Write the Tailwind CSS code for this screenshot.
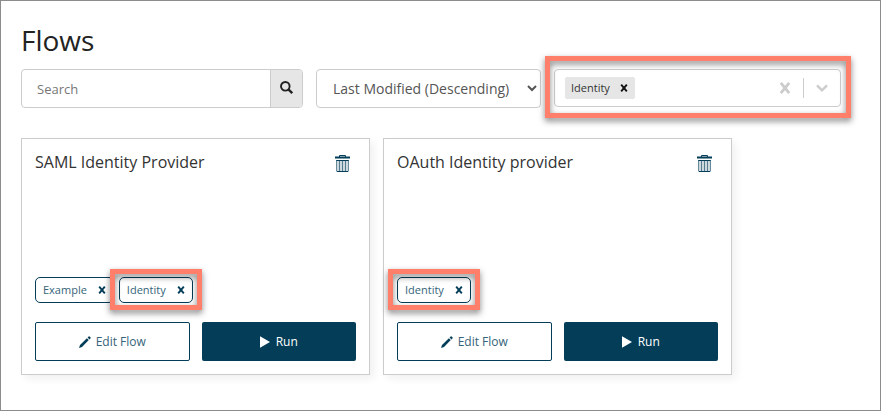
<!DOCTYPE html>
<html lang="en">
<head>
    <meta charset="UTF-8">
    <meta name="viewport" content="width=device-width, initial-scale=1.0">
    <title>Flows</title>
    <script src="https://cdn.jsdelivr.net/npm/@tailwindcss/browser@4"></script>
</head>
<body class="bg-white font-['Open_Sans',sans-serif] text-[#333]">
    <!-- Shared icons -->
    <svg class="hidden">
        <symbol id="icon-cross" viewBox="0 0 8 8">
            <path d="M1.2 0.6 L6.8 7.4 M6.8 0.6 L1.2 7.4" stroke="currentColor" stroke-width="1.9" fill="none"/>
        </symbol>
        <symbol id="icon-trash" viewBox="0 0 15 18">
            <path d="M4.5 3 V1.5 H10.5 V3" stroke="currentColor" fill="none"/>
            <path d="M0 2.6 H15 V4.6 H0 Z M1.2 6 H13.8 V7 H1.2 Z M2 17 H13 V18 H2 Z" fill="currentColor"/>
            <path d="M1.5 6.5 V17.5 M13.5 6.5 V17.5" stroke="currentColor" stroke-opacity="0.6" fill="none"/>
            <path d="M2 7 H13 V17 H2 Z" fill="currentColor" fill-opacity="0.2"/>
            <path d="M4.5 7 V17 M7.5 7 V17 M10.5 7 V17" stroke="currentColor" stroke-opacity="0.6" fill="none"/>
        </symbol>
        <symbol id="icon-pencil" viewBox="0 0 12 12">
            <path d="M0 12 L1 8.9 L7.9 2.2 L9.8 4.1 L3 11 Z M8.6 1.5 L9.7 0.4 Q10.1 0 10.6 0.4 L11.6 1.4 Q12 1.9 11.6 2.3 L10.5 3.4 Z" fill="currentColor"/>
        </symbol>
        <symbol id="icon-play" viewBox="0 0 10 12">
            <path d="M0 0.2 L10 6 L0 11.8 Z" fill="currentColor"/>
        </symbol>
    </svg>

    <main class="min-h-screen border border-[#8c8c8c] pt-5 pl-5 pr-[39px] pb-8">
        <h1 class="text-[28px] leading-[38px] mb-[10px] text-[#222]">Flows</h1>

        <!-- Filters -->
        <div class="grid grid-cols-[282fr_225fr_287fr] gap-[13px] items-start mb-[30px]">
            <form class="flex h-[39px] border border-[#ccc] rounded" role="search">
                <input type="text" aria-label="Search" placeholder="Search" class="flex-1 w-0 min-w-0 pt-[2px] px-[15px] text-[13px] placeholder:text-[#777] rounded-l outline-none">
                <button type="button" aria-label="Run search" class="w-8 flex justify-center items-center pb-[2px] bg-[#e6e6e6] border-l border-[#ccc] rounded-r-[3px] text-[#222]">
                    <svg class="size-[13px]" viewBox="0 0 13 13" fill="none" stroke="currentColor">
                        <circle cx="5.3" cy="5.3" r="4.3" stroke-width="1.9"/>
                        <path d="M8.4 8.4 L12.2 12.2" stroke-width="2.3"/>
                    </svg>
                </button>
            </form>

            <select aria-label="Sort order" class="w-full h-[39px] pl-3 border border-[#ccc] rounded bg-white text-sm text-[#555]">
                <option>Last Modified (Descending)</option>
                <option>Last Modified (Ascending)</option>
            </select>

            <div class="relative flex items-center h-[38px] pl-[10px] border border-[#ccc] rounded">
                <span class="flex items-center h-[22px] pl-[6px] pr-[7px] gap-[10px] rounded-xs bg-[#e6e6e6] text-[11px]">
                    Identity
                    <button type="button" aria-label="Remove Identity" class="text-[#111]"><svg class="size-2"><use href="#icon-cross"/></svg></button>
                </span>
                <input type="text" aria-label="Filter by tag" class="flex-1 w-0 min-w-0 px-1 text-[11px] outline-none">
                <button type="button" aria-label="Clear tags" class="text-[#ccc]"><svg class="size-3"><use href="#icon-cross"/></svg></button>
                <span class="w-px h-5 bg-[#ccc] mx-3"></span>
                <button type="button" aria-label="Show tags" class="text-[#ccc] mr-3">
                    <svg class="w-3 h-2" viewBox="0 0 12 8" fill="none" stroke="currentColor" stroke-width="2.4"><path d="M1 1.3 L6 6.3 L11 1.3"/></svg>
                </button>
                <div class="absolute -top-[14px] -bottom-3 -left-[10px] -right-[11px] border-5 border-[#ff7f6a] drop-shadow-[0_3px_3px_rgba(0,0,0,0.5)] pointer-events-none"></div>
            </div>
        </div>

        <!-- Flow cards -->
        <div class="flex flex-wrap gap-[13px]">
            <article class="w-[349px] p-[13px] border border-[#ccc] bg-white shadow-[4px_4px_8px_rgba(0,0,0,0.06)]">
                <div class="flex justify-between items-start h-[125px] pr-[6px]">
                    <h2 class="text-base leading-5">SAML Identity Provider</h2>
                    <button type="button" aria-label="Delete flow" class="mt-[2px] text-[#033d58]"><svg class="w-[15px] h-[18px]"><use href="#icon-trash"/></svg></button>
                </div>
                <div class="flex gap-[5px] mb-[19px] text-[11px] text-[#033d58]">
                    <span class="flex items-center h-[26px] px-[7px] gap-[11px] border border-[#033d58] rounded-[5px]">
                        <span class="text-[#356479]">Example</span>
                        <button type="button" aria-label="Remove Example"><svg class="size-2"><use href="#icon-cross"/></svg></button>
                    </span>
                    <span class="relative flex items-center h-[26px] px-[7px] gap-[11px] border border-[#033d58] rounded-[5px]">
                        <span class="text-[#356479]">Identity</span>
                        <button type="button" aria-label="Remove Identity"><svg class="size-2"><use href="#icon-cross"/></svg></button>
                        <span class="absolute -top-[9px] -bottom-2 -inset-x-[10px] border-5 border-[#ff7f6a] drop-shadow-[0_3px_3px_rgba(0,0,0,0.5)] pointer-events-none"></span>
                    </span>
                </div>
                <div class="grid grid-cols-2 gap-3 text-xs">
                    <button type="button" class="flex justify-center items-center gap-[5px] h-[39px] border border-[#033d58] rounded-xs text-[#033d58]">
                        <svg class="size-3"><use href="#icon-pencil"/></svg>
                        <span class="text-[#356479]">Edit Flow</span>
                    </button>
                    <button type="button" class="flex justify-center items-center gap-[6px] h-[39px] rounded-xs bg-[#033d58] text-white">
                        <svg class="w-[10px] h-3"><use href="#icon-play"/></svg>
                        Run
                    </button>
                </div>
            </article>

            <article class="w-[349px] p-[13px] border border-[#ccc] bg-white shadow-[4px_4px_8px_rgba(0,0,0,0.06)]">
                <div class="flex justify-between items-start h-[125px] pr-[6px]">
                    <h2 class="text-base leading-5">OAuth Identity provider</h2>
                    <button type="button" aria-label="Delete flow" class="mt-[2px] text-[#033d58]"><svg class="w-[15px] h-[18px]"><use href="#icon-trash"/></svg></button>
                </div>
                <div class="flex gap-[5px] mb-[19px] text-[11px] text-[#033d58]">
                    <span class="relative flex items-center h-[26px] px-[7px] gap-[11px] border border-[#033d58] rounded-[5px]">
                        <span class="text-[#356479]">Identity</span>
                        <button type="button" aria-label="Remove Identity"><svg class="size-2"><use href="#icon-cross"/></svg></button>
                        <span class="absolute -top-[9px] -bottom-2 -inset-x-[10px] border-5 border-[#ff7f6a] drop-shadow-[0_3px_3px_rgba(0,0,0,0.5)] pointer-events-none"></span>
                    </span>
                </div>
                <div class="grid grid-cols-2 gap-3 text-xs">
                    <button type="button" class="flex justify-center items-center gap-[5px] h-[39px] border border-[#033d58] rounded-xs text-[#033d58]">
                        <svg class="size-3"><use href="#icon-pencil"/></svg>
                        <span class="text-[#356479]">Edit Flow</span>
                    </button>
                    <button type="button" class="flex justify-center items-center gap-[6px] h-[39px] rounded-xs bg-[#033d58] text-white">
                        <svg class="w-[10px] h-3"><use href="#icon-play"/></svg>
                        Run
                    </button>
                </div>
            </article>
        </div>
    </main>
</body>
</html>
